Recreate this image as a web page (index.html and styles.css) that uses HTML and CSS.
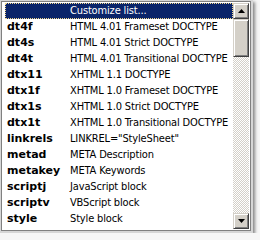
FILE: index.html
```html
<!DOCTYPE html>
<html>
<head>
<meta charset="utf-8">
<link rel="stylesheet" href="styles.css">
</head>
<body>
<div class="popup">
  <div class="frame">
    <ul class="list">
      <li class="row sel"><span class="key"></span><span class="desc">Customize list...</span></li>
      <li class="row"><span class="key">dt4f</span><span class="desc">HTML 4.01 Frameset DOCTYPE</span></li>
      <li class="row"><span class="key">dt4s</span><span class="desc">HTML 4.01 Strict DOCTYPE</span></li>
      <li class="row"><span class="key">dt4t</span><span class="desc">HTML 4.01 Transitional DOCTYPE</span></li>
      <li class="row"><span class="key">dtx11</span><span class="desc">XHTML 1.1 DOCTYPE</span></li>
      <li class="row"><span class="key">dtx1f</span><span class="desc">XHTML 1.0 Frameset DOCTYPE</span></li>
      <li class="row"><span class="key">dtx1s</span><span class="desc">XHTML 1.0 Strict DOCTYPE</span></li>
      <li class="row"><span class="key">dtx1t</span><span class="desc">XHTML 1.0 Transitional DOCTYPE</span></li>
      <li class="row"><span class="key">linkrels</span><span class="desc">LINKREL="StyleSheet"</span></li>
      <li class="row"><span class="key">metad</span><span class="desc">META Description</span></li>
      <li class="row"><span class="key">metakey</span><span class="desc">META Keywords</span></li>
      <li class="row"><span class="key">scriptj</span><span class="desc">JavaScript block</span></li>
      <li class="row"><span class="key">scriptv</span><span class="desc">VBScript block</span></li>
      <li class="row"><span class="key">style</span><span class="desc">Style block</span></li>
    </ul>
    <div class="scrollbar">
      <div class="btn"><svg width="7" height="4" viewBox="0 0 7 4"><polygon points="3.5,0 7,4 0,4" fill="#000"/></svg></div>
      <div class="thumb"></div>
      <div class="track"></div>
      <div class="btn"><svg width="7" height="4" viewBox="0 0 7 4"><polygon points="0,0 7,0 3.5,4" fill="#000"/></svg></div>
    </div>
  </div>
</div>
</body>
</html>
```

FILE: styles.css
```css
html, body {
  margin: 0;
  padding: 0;
  background: #f6f6f6;
}
.popup {
  width: 253px;
  height: 233px;
  box-sizing: border-box;
  border-style: solid;
  border-color: #d6d6d6;
  border-width: 1px 2px 2px 1px;
  box-shadow: 2px 2px 3px rgba(0, 0, 0, 0.45);
}
.frame {
  height: 100%;
  box-sizing: border-box;
  border: 1px solid #808080;
  background: #fff;
  padding: 1px 1px 1px 3px;
  display: flex;
  align-items: flex-start;
}
.list {
  list-style: none;
  margin: 0;
  padding: 0;
  width: 228px;
}
.row {
  display: flex;
  height: 16px;
  line-height: 16px;
  white-space: nowrap;
  overflow: hidden;
}
.key {
  width: 65px;
  padding-left: 2px;
  box-sizing: border-box;
  flex: none;
  font-family: "DejaVu Sans", sans-serif;
  font-weight: bold;
  font-size: 11px;
  color: #000;
}
.desc {
  font-family: "DejaVu Sans Condensed", "DejaVu Sans", sans-serif;
  font-size: 11px;
  letter-spacing: -0.15px;
  color: #000;
}
.sel {
  background: #0a246a;
  outline: 1px dotted #f0d890;
  outline-offset: -1px;
}
.sel .desc {
  color: #fff;
}
.scrollbar {
  width: 16px;
  height: 226px;
  display: flex;
  flex-direction: column;
  flex: none;
}
.btn, .thumb {
  box-sizing: border-box;
  background: #d4d0c8;
  border: 1px solid;
  border-color: #d4d0c8 #404040 #404040 #d4d0c8;
  box-shadow: inset 1px 1px #fff, inset -1px -1px #808080;
}
.btn {
  height: 16px;
  display: flex;
  align-items: center;
  justify-content: center;
  flex: none;
}
.thumb {
  height: 38px;
  flex: none;
}
.track {
  flex: 1;
  background: repeating-conic-gradient(#d4d0c8 0 25%, #fff 0 50%) 0 0 / 2px 2px;
}
```
